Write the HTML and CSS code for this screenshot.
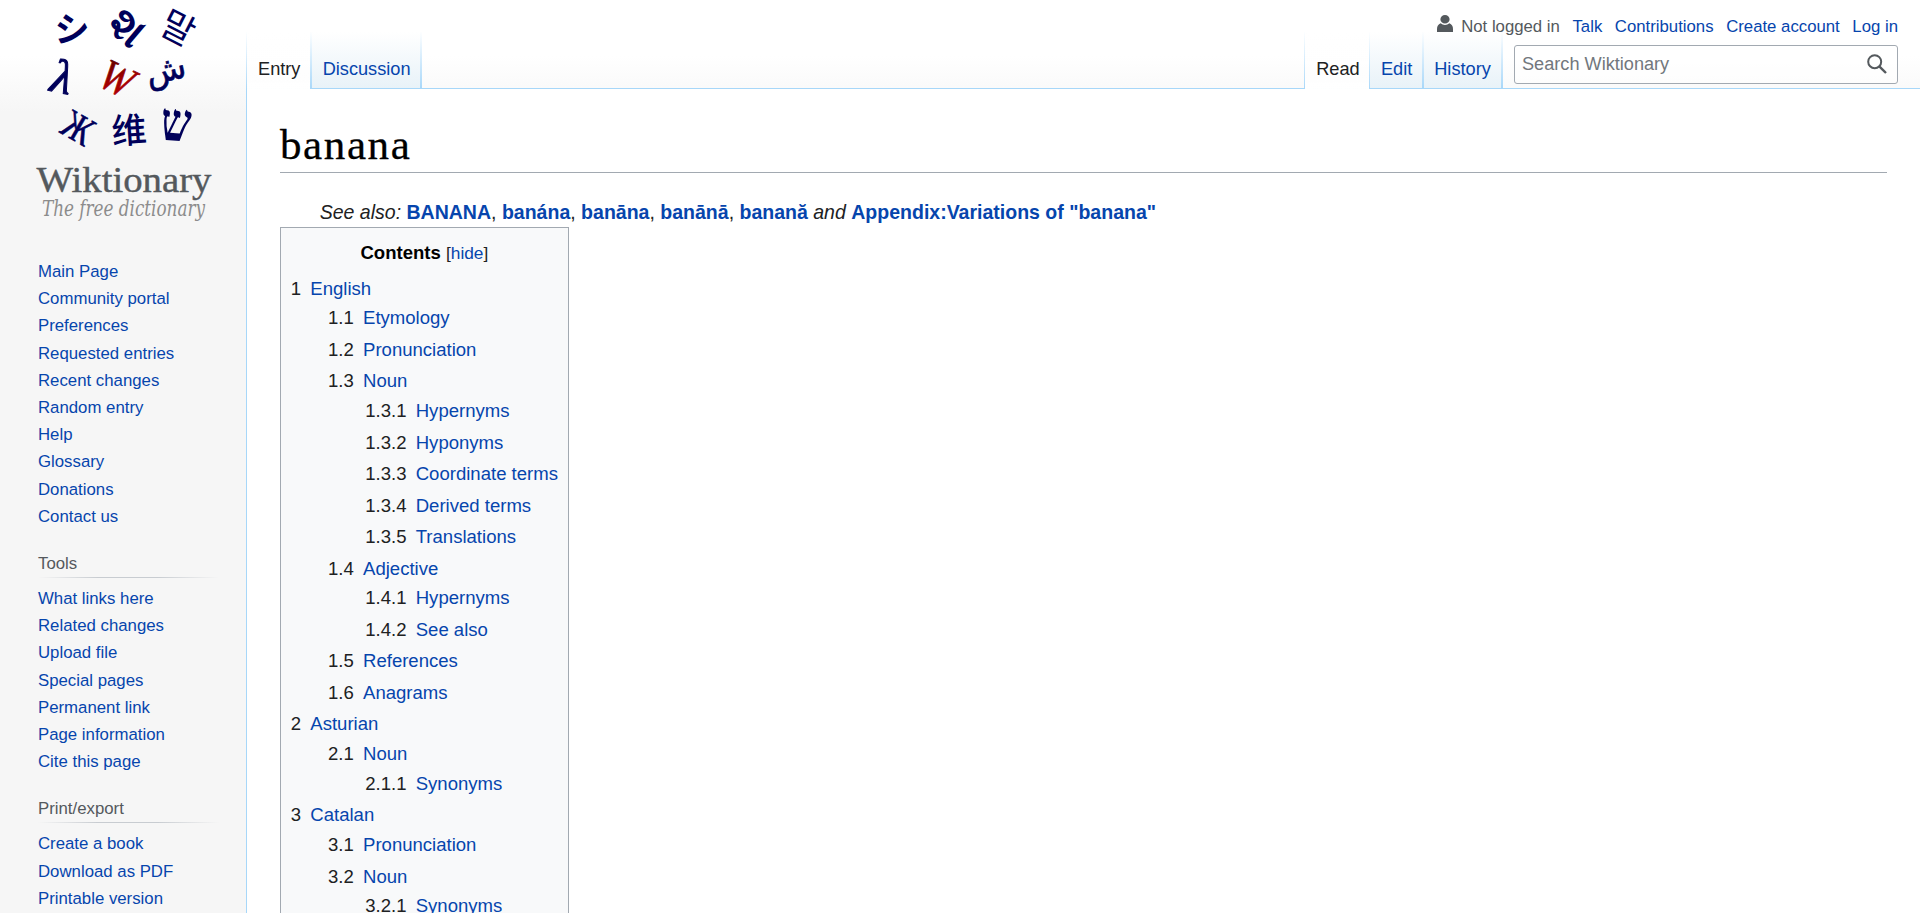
FILE: index.html
```html
<!DOCTYPE html>
<html lang="en">
<head>
<meta charset="utf-8">
<title>banana - Wiktionary</title>
<link rel="stylesheet" href="styles.css">
</head>
<body>
<div class="page">
  <aside class="sidebar">
    <svg class="logo" viewBox="0 0 246 240" role="img" aria-label="Wiktionary, the free dictionary">
      <defs>
        <linearGradient id="red" x1="0" y1="0" x2="0.6" y2="1"><stop offset="0" stop-color="#400"/><stop offset="0.6" stop-color="#a00000"/><stop offset="1" stop-color="#b40000"/></linearGradient>
      </defs>
      <g class="logo-glyphs">
        <text class="cjk" transform="translate(72 29) rotate(2)" y="13" font-size="35">シ</text>
        <text class="indic" transform="translate(126 29) rotate(40)" y="13" font-size="44">શ</text>
        <text class="cjk thin" transform="translate(178 28) rotate(27)" y="13" font-size="36">말</text>
        <text class="serif" transform="translate(62 78) rotate(12)" y="15" font-size="48">λ</text>
        <text class="serif w" transform="translate(117 78) rotate(26) scale(.88 1)" y="15" font-size="44">W</text>
        <text class="arabic" transform="translate(167 77) rotate(-12)" y="4" font-size="33">ش</text>
        <text class="serif upright" transform="translate(78 128) rotate(30) scale(.9 1.1)" y="12" font-size="37">Ж</text>
        <text class="cjk medium" transform="translate(129 130) rotate(-4)" y="13" font-size="35">维</text>
        <text class="hebrew" transform="translate(176 125) rotate(4) scale(1 1.25)" y="12.500" font-size="43">ש</text>
      </g>
      <text class="logo-name" x="36.5" y="191.500" textLength="175" lengthAdjust="spacingAndGlyphs">Wiktionary</text>
      <text class="logo-tag" x="42" y="216" textLength="163" lengthAdjust="spacingAndGlyphs">The free dictionary</text>
    </svg>
    <nav class="portal">
      <ul>
        <li><a>Main Page</a></li><li><a>Community portal</a></li><li><a>Preferences</a></li><li><a>Requested entries</a></li><li><a>Recent changes</a></li><li><a>Random entry</a></li><li><a>Help</a></li><li><a>Glossary</a></li><li><a>Donations</a></li><li><a>Contact us</a></li>
      </ul>
    </nav>
    <nav class="portal">
      <h3>Tools</h3>
      <ul>
        <li><a>What links here</a></li><li><a>Related changes</a></li><li><a>Upload file</a></li><li><a>Special pages</a></li><li><a>Permanent link</a></li><li><a>Page information</a></li><li><a>Cite this page</a></li>
      </ul>
    </nav>
    <nav class="portal">
      <h3>Print/export</h3>
      <ul>
        <li><a>Create a book</a></li><li><a>Download as PDF</a></li><li><a>Printable version</a></li>
      </ul>
    </nav>
  </aside>
  <div class="main">
    <header class="head">
      <ul class="personal">
        <li class="anon"><svg class="user" viewBox="0 0 16 17"><path d="M8 8.6a4.6 4.3 0 1 0 0-8.6 4.6 4.3 0 0 0 0 8.6zM3.6 8.3Q0 10 0 14v3h16v-3q0-4-3.600-5.700Q10.500 10 8 10T3.600 8.300z" fill="#54595d"/></svg>Not logged in</li>
        <li><a>Talk</a></li><li><a>Contributions</a></li><li><a>Create account</a></li><li><a>Log in</a></li>
      </ul>
      <div class="nav">
        <ul class="tabs">
          <li class="tab selected">Entry</li><li class="tab"><a>Discussion</a></li>
        </ul>
        <ul class="tabs views">
          <li class="tab selected">Read</li><li class="tab"><a>Edit</a></li><li class="tab"><a>History</a></li>
        </ul>
        <div class="search">
          <span>Search Wiktionary</span>
          <svg class="glass" viewBox="0 0 20 20" fill="none" stroke="#54595d"><circle cx="7.700" cy="7.700" r="6.500" stroke-width="2"/><path d="M12.300 12.300l6.700 6.700" stroke-width="2.400"/></svg>
        </div>
      </div>
    </header>
    <main class="content">
      <h1>banana</h1>
      <p class="see"><i>See also:</i> <b><a>BANANA</a></b>, <b><a>banána</a></b>, <b><a>banāna</a></b>, <b><a>banānā</a></b>, <b><a>banană</a></b> <i>and</i> <b><a>Appendix:Variations of "banana"</a></b></p>
      <div class="toc">
        <div class="toc-title"><b>Contents</b> <span>[<a>hide</a>]</span></div>
        <ul>
          <li><i>1</i><a>English</a>
            <ul>
              <li><i>1.1</i><a>Etymology</a></li>
              <li><i>1.2</i><a>Pronunciation</a></li>
              <li><i>1.3</i><a>Noun</a>
                <ul>
                  <li><i>1.3.1</i><a>Hypernyms</a></li>
                  <li><i>1.3.2</i><a>Hyponyms</a></li>
                  <li><i>1.3.3</i><a>Coordinate terms</a></li>
                  <li><i>1.3.4</i><a>Derived terms</a></li>
                  <li><i>1.3.5</i><a>Translations</a></li>
                </ul>
              </li>
              <li><i>1.4</i><a>Adjective</a>
                <ul>
                  <li><i>1.4.1</i><a>Hypernyms</a></li>
                  <li><i>1.4.2</i><a>See also</a></li>
                </ul>
              </li>
              <li><i>1.5</i><a>References</a></li>
              <li><i>1.6</i><a>Anagrams</a></li>
            </ul>
          </li>
          <li><i>2</i><a>Asturian</a>
            <ul>
              <li><i>2.1</i><a>Noun</a>
                <ul><li><i>2.1.1</i><a>Synonyms</a></li></ul>
              </li>
            </ul>
          </li>
          <li><i>3</i><a>Catalan</a>
            <ul>
              <li><i>3.1</i><a>Pronunciation</a></li>
              <li><i>3.2</i><a>Noun</a>
                <ul><li><i>3.2.1</i><a>Synonyms</a></li></ul>
              </li>
            </ul>
          </li>
        </ul>
      </div>
    </main>
  </div>
</div>
</body>
</html>
```
FILE: styles.css
```css
* { box-sizing: border-box; }
html, body { margin: 0; height: 913px; overflow: hidden; }
body { font-family: "Liberation Sans", Arial, sans-serif; color: #202122; background: #f6f6f6; }
ul { list-style: none; margin: 0; padding: 0; }
a { color: #0645ad; text-decoration: none; }
.page { display: flex; height: 913px; overflow: hidden; background: linear-gradient(#fff 50%, #f6f6f6 100%) 0 0 / 100% 112px no-repeat; }

/* Sidebar */
.sidebar { width: 246px; flex: none; font-size: 16.8px; }
.logo { display: block; width: 246px; height: 240px; margin-bottom: 18.7px; overflow: visible; }
.logo-glyphs { fill: #00005a; text-anchor: middle; }
.cjk { font-family: "Noto Sans CJK JP", sans-serif; font-weight: 700; }
.medium { font-family: "Noto Sans CJK SC", sans-serif; font-weight: 500; }
.thin { font-family: "Noto Sans CJK KR", sans-serif; font-weight: 400; }
.indic { font-family: "Noto Sans", sans-serif; font-weight: 700; }
.serif { font-family: "Liberation Serif", serif; font-style: italic; stroke: #00005a; stroke-width: 1; }
.upright { font-style: normal; stroke-width: .5; }
.w { fill: url(#red); stroke: url(#red); stroke-width: .7; }
.arabic { font-family: "DejaVu Sans", sans-serif; stroke: #00005a; stroke-width: .6; }
.hebrew { font-family: "Liberation Serif", serif; font-weight: 700; }
.logo-name { font: 36px "Liberation Serif", serif; fill: #54595d; stroke: #54595d; stroke-width: .4; }
.logo-tag { font: italic 22.5px "DejaVu Serif Condensed", "DejaVu Serif", serif; fill: #8c8c8c; }
.portal { padding-left: 38px; line-height: 18.9px; }
.portal li { padding: 4.17px 0; }
.portal h3 { margin: 20.2px 27px 7.7px 0; font-size: 16.8px; font-weight: 400; line-height: 26.9px; color: #54595d; height: 27px; background: linear-gradient(to right, rgba(200,204,209,0) 0, #c8ccd1 33%, #c8ccd1 66%, rgba(200,204,209,0) 100%) 0 100% / 100% 1.4px no-repeat; }

/* Header */
.main { flex: 1; min-width: 0; display: flex; flex-direction: column; }
.head { height: 88px; flex: none; display: flex; flex-direction: column; }
.personal { display: flex; justify-content: flex-end; gap: 12.6px; height: 32px; padding: 14px 22px 0 0; font-size: 16.75px; line-height: 26.9px; }
.anon { display: flex; color: #54595d; }
.user { width: 16px; height: 17px; margin: 1px 8px 0 0; }
.nav { display: flex; height: 56px; }
.tabs { display: flex; height: 57px; font-size: 18.2px; }
.tab { position: relative; padding: 23px 10.2px 0 10.4px; line-height: 29px; height: 56px; border-right: 2px solid; border-image: linear-gradient(#fff, #a7d7f9) 1; background: linear-gradient(#fff, #e8f2f8); }
.tab.selected { height: 57px; padding: 23px 9.6px 0 11px; background: linear-gradient(rgba(255,255,255,0), #fff); }
.tab.selected + .tab { padding: 23px 9.6px 0 10.6px; }
.tabs .tab:first-child { border-left: 1px solid; }
.views { margin-left: auto; }
.views .tab.selected { border-right-width: 1px; }
.search { display: flex; justify-content: space-between; width: 384px; height: 39px; margin: 13px 22px 0 11px; padding: 0 10px 0 7px; border: 1px solid #a2a9b1; border-radius: 3px; background: rgba(255,255,255,.5); font-size: 18.15px; line-height: 36px; color: #72777d; }
.glass { width: 20px; height: 20px; margin-top: 8px; }

/* Article */
.content { flex: 1; padding: 27px 33px 0 33px; border: solid #a7d7f9; border-width: 1px 0 0 1px; background: #fff; }
h1 { margin: 0; height: 57px; font: 400 43px/57px "Liberation Serif", serif; letter-spacing: 1.6px; -webkit-text-stroke: .3px #000; color: #000; border-bottom: 1px solid #a2a9b1; }
.see { margin: 24px 0 0; padding-left: 39.7px; font-size: 19.52px; line-height: 31.36px; height: 30px; white-space: nowrap; }
.toc { display: table; padding: 9.8px; border: 1px solid #a2a9b1; background: #f8f9fa; font-size: 18.56px; line-height: 29.7px; }
.toc-title { text-align: center; color: #000; }
.toc-title span { font-size: 17.3px; color: #202122; }
.toc ul { margin-top: 5.2px; }
.toc ul ul { margin: 0 0 0 37.24px; }
.toc li { margin-bottom: 1.82px; }
.toc li > i, .toc li > a { display: table-cell; font-style: normal; }
.toc li > i { padding-right: 9.2px; }
```
